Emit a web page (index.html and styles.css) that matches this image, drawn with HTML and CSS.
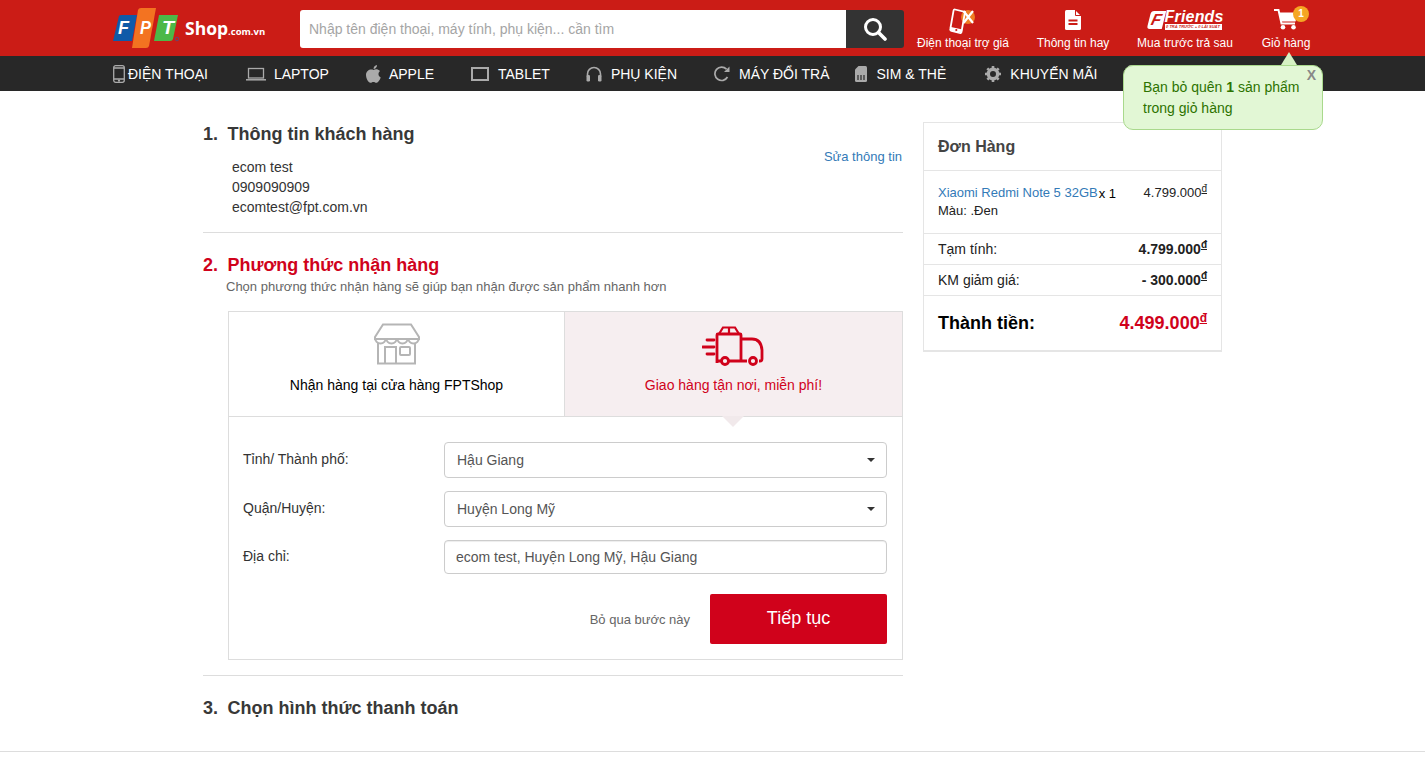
FILE: index.html
```html
<!DOCTYPE html>
<html lang="vi">
<head>
    <meta charset="UTF-8">
    <title>FPT Shop - Thanh toán</title>
    <link rel="stylesheet" href="styles.css">
</head>
<body>

<header class="topbar">
    <div class="topbar-in">
        <a class="logo">
            <svg class="logo-tiles" width="67" height="41" viewBox="0 0 67 41">
                <path d="M6 8 Q6.500 7 9 7 L24 7 L19 33 L0 33 Z" fill="#0f5aa8"/>
                <path d="M25 2 Q25.500 0 28 0 L43 0 L36 38 Q35.500 40 33 40 L19 40 Z" fill="#f37321"/>
                <path d="M46 7 L65 7 L60 31 Q59.500 33 57 33 L41 33 Z" fill="#4cb848"/>
                <text x="5" y="26" class="logo-letter" textLength="11" lengthAdjust="spacingAndGlyphs">F</text>
                <text x="27" y="26" class="logo-letter" textLength="11" lengthAdjust="spacingAndGlyphs">P</text>
                <text x="49" y="26" class="logo-letter" textLength="12" lengthAdjust="spacingAndGlyphs">T</text>
                <circle cx="64" cy="31" r="1.800" fill="none" stroke="#4a4f8c" stroke-width="0.800"/>
            </svg>
            <span class="logo-name">Shop<small>.com.vn</small></span>
        </a>
        <form class="search">
            <input class="search-input" type="text" placeholder="Nhập tên điện thoại, máy tính, phụ kiện... cần tìm">
            <button class="search-btn" type="button">
                <svg width="24" height="24" viewBox="0 0 24 24" fill="none" stroke="#fff">
                    <circle cx="10" cy="10" r="7.5" stroke-width="3"/>
                    <path d="M15.5 15.5 L22 22" stroke-width="3.6" stroke-linecap="round"/>
                </svg>
            </button>
        </form>
        <ul class="top-links">
            <li class="top-link link-phone">
                <svg width="28" height="27" viewBox="0 0 28 27">
                    <circle cx="19" cy="9" r="7" fill="#ef7d23"/>
                    <path d="M6 1.500 L16 4 L12.500 24 Q12.300 25.500 10.500 25 L2.500 23 Q1 22.500 1.300 21 L4.500 2.800 Q4.800 1.200 6 1.500 Z" fill="none" stroke="#fff" stroke-width="1.800"/>
                    <path d="M2 19 L13.500 21.500 L12.500 25 L1 22.500 Z" fill="#fff"/>
                    <circle cx="7.300" cy="22" r="1.100" fill="#cb1c16"/>
                    <path d="M14.500 3 L24 15 M24 3 L14.500 15" stroke="#fff" stroke-width="2.200"/>
                </svg>
                <span>Điện thoại trợ giá</span>
            </li>
            <li class="top-link link-news">
                <svg width="16" height="20" viewBox="0 0 16 20">
                    <path d="M1.500 0 H10 L16 6 V18.500 Q16 20 14.500 20 H1.500 Q0 20 0 18.500 V1.500 Q0 0 1.500 0 Z" fill="#fff"/>
                    <path d="M10.500 0 V5.500 H16" fill="none" stroke="#cb1c16" stroke-width="1"/>
                    <path d="M3.500 10.500 H12.500 M3.500 14 H12.500" stroke="#cb1c16" stroke-width="1.800"/>
                </svg>
                <span>Thông tin hay</span>
            </li>
            <li class="top-link link-friends">
                <div class="friends">
                    <span class="friends-f">F</span>
                    <div class="friends-text">
                        <b>Friends</b>
                        <i>0 TRẢ TRƯỚC + 0 LÃI SUẤT</i>
                    </div>
                </div>
                <span>Mua trước trả sau</span>
            </li>
            <li class="top-link link-cart">
                <svg width="24" height="21" viewBox="0 0 24 21">
                    <path d="M0 1 H4.500 L7.500 14.500 H21" fill="none" stroke="#fff" stroke-width="2"/>
                    <path d="M5 3.500 H24 L21.500 12.500 H7 Z" fill="#fff"/>
                    <circle cx="9" cy="18.300" r="2.300" fill="#fff"/>
                    <circle cx="19.500" cy="18.300" r="2.300" fill="#fff"/>
                </svg>
                <span class="cart-count">1</span>
                <span>Giỏ hàng</span>
            </li>
        </ul>
    </div>
</header>

<nav class="mainnav">
    <ul class="mainnav-in">
        <li class="nav-item item-phone">
            <svg width="12" height="18" viewBox="0 0 12 18" fill="none" stroke="#aaa" stroke-width="1.300"><rect x="0.700" y="0.700" width="10.600" height="16.600" rx="2"/><path d="M1 14 H11 M1 3 H11"/><circle cx="6" cy="15.700" r="0.500"/></svg>
            ĐIỆN THOẠI
        </li>
        <li class="nav-item item-tight item-laptop">
            <svg width="20" height="14" viewBox="0 0 20 14" fill="none" stroke="#aaa"><rect x="2.500" y="1.500" width="15" height="9.500" stroke-width="1.300"/><path d="M0 12.800 H20" stroke-width="1.500"/></svg>
            LAPTOP
        </li>
        <li class="nav-item item-tight">
            <svg width="15" height="18" viewBox="0 0 15 18" fill="#aaa"><path d="M7.500 5 C9 3.800 12 3.700 14 6 C12 7.500 11.800 11 14.700 12.500 C13.800 15 12 17.800 10.500 17.800 C9.200 17.800 8.800 17 7.500 17 C6 17 5.500 17.800 4.300 17.800 C2.500 17.800 0 13.500 0 10 C0 5.500 4.500 3.500 7.500 5 Z"/><path d="M7.500 4 C7.500 2 9 0.300 11 0 C11.200 2 9.500 4 7.500 4 Z"/></svg>
            APPLE
        </li>
        <li class="nav-item">
            <svg width="18" height="14" viewBox="0 0 18 14" fill="none" stroke="#aaa" stroke-width="2"><rect x="1" y="1" width="16" height="12"/></svg>
            TABLET
        </li>
        <li class="nav-item item-acc">
            <svg width="16" height="16" viewBox="0 0 16 16" fill="none" stroke="#aaa"><path d="M1.500 10 V8 A6.500 6.500 0 0 1 14.500 8 V10" stroke-width="1.600"/><rect x="0.500" y="9" width="3.500" height="6.500" rx="1.200" fill="#aaa" stroke="none"/><rect x="12" y="9" width="3.500" height="6.500" rx="1.200" fill="#aaa" stroke="none"/></svg>
            PHỤ KIỆN
        </li>
        <li class="nav-item">
            <svg width="16" height="16" viewBox="0 0 16 16" fill="none" stroke="#aaa"><path d="M13.500 11 A6.700 6.700 0 1 1 12.500 3.200" stroke-width="1.700"/><path d="M15.500 0.500 V6 H10 Z" fill="#aaa" stroke="none"/></svg>
            MÁY ĐỔI TRẢ
        </li>
        <li class="nav-item item-sim">
            <svg width="12" height="16" viewBox="0 0 12 16"><path d="M3.500 0 H10.500 Q12 0 12 1.500 V14.500 Q12 16 10.500 16 H1.500 Q0 16 0 14.500 V3.500 Z" fill="#aaa"/><path d="M3 9 V14 M6 9 V14 M9 9 V14" stroke="#282828" stroke-width="1.200"/></svg>
            SIM &amp; THẺ
        </li>
        <li class="nav-item item-promo">
            <svg width="16" height="16" viewBox="0 0 16 16"><circle cx="8" cy="8" r="4.700" fill="none" stroke="#aaa" stroke-width="3.400"/><path d="M8 0 V16 M0 8 H16 M2.300 2.300 L13.700 13.700 M13.700 2.300 L2.300 13.700" stroke="#aaa" stroke-width="2.600" stroke-dasharray="2.600 10.800 2.600"/></svg>
            KHUYẾN MÃI
        </li>
        <li class="nav-item item-hidden">
            <svg width="12" height="18" viewBox="0 0 12 18"><ellipse cx="6" cy="9" rx="6" ry="9" fill="#aaa"/></svg>
        </li>
    </ul>
</nav>

<div class="cart-tip">
    <span class="cart-tip-close">X</span>
    Bạn bỏ quên <b>1</b> sản phẩm<br>trong giỏ hàng
</div>

<main class="page">
    <div class="steps">
        <section class="step step-info">
            <h3 class="step-title"><span>1.</span>Thông tin khách hàng</h3>
            <div class="info-row">
                <div class="info">
                    ecom test<br>
                    0909090909<br>
                    ecomtest@fpt.com.vn
                </div>
                <a class="info-edit">Sửa thông tin</a>
            </div>
        </section>

        <section class="step step-ship">
            <h3 class="step-title active"><span>2.</span>Phương thức nhận hàng</h3>
            <p class="step-note">Chọn phương thức nhận hàng sẽ giúp bạn nhận được sản phẩm nhanh hơn</p>
            <div class="ship-box">
                <div class="ship-tabs">
                    <div class="ship-tab">
                        <svg width="46" height="42" viewBox="0 0 46 42" fill="none" stroke="#b5b5b5" stroke-width="2">
                            <path d="M9 1.500 H37 L45 14 V16 H1 V14 Z"/>
                            <path d="M1 15 A5.500 5.500 0 0 0 12 15 A5.500 5.500 0 0 0 23 15 A5.500 5.500 0 0 0 34 15 A5.500 5.500 0 0 0 45 15"/>
                            <path d="M4 20 V40.500 H41 V20"/>
                            <path d="M11 40.500 V24 H22 V40.500"/>
                            <rect x="26" y="24" width="10" height="8" rx="1"/>
                        </svg>
                        <span>Nhận hàng tại cửa hàng FPTShop</span>
                    </div>
                    <div class="ship-tab selected">
                        <svg width="62" height="40" viewBox="0 0 62 40" fill="none" stroke="#d0021b" stroke-width="2.800">
                            <path d="M15 37 V9 Q15 8 16 8 H38 Q39 8 39 9 V35"/>
                            <path d="M17 8 L21 1.500 H33 L37 8 M27 1.500 V8" stroke-width="2.200"/>
                            <path d="M39 13 H50 Q59 13 60 24 V33 Q60 35 58 35 H57"/>
                            <path d="M45 35 H27 M19 35 H15"/>
                            <circle cx="23" cy="35" r="3.500"/>
                            <circle cx="51" cy="35" r="3.500"/>
                            <path d="M5 14 H12 M0.500 21 H12 M5 28 H12" stroke-linecap="round"/>
                        </svg>
                        <span>Giao hàng tận nơi, miễn phí!</span>
                    </div>
                </div>
                <form class="ship-form">
                    <div class="form-row">
                        <label>Tỉnh/ Thành phố:</label>
                        <div class="select-wrap">
                            <select class="field"><option>Hậu Giang</option></select>
                        </div>
                    </div>
                    <div class="form-row">
                        <label>Quận/Huyện:</label>
                        <div class="select-wrap">
                            <select class="field"><option>Huyện Long Mỹ</option></select>
                        </div>
                    </div>
                    <div class="form-row">
                        <label>Địa chỉ:</label>
                        <input class="field field-text" type="text" value="ecom test, Huyện Long Mỹ, Hậu Giang">
                    </div>
                    <div class="form-actions">
                        <a class="skip">Bỏ qua bước này</a>
                        <button class="btn-next" type="button">Tiếp tục</button>
                    </div>
                </form>
            </div>
        </section>

        <section class="step step-pay">
            <h3 class="step-title"><span>3.</span>Chọn hình thức thanh toán</h3>
        </section>
    </div>

    <aside class="order">
        <h4 class="order-head">Đơn Hàng</h4>
        <div class="order-item">
            <div>
                <a class="order-name">Xiaomi Redmi Note 5 32GB</a><span class="order-qty">x 1</span><br>
                Màu: .Đen
            </div>
            <div class="price">4.799.000<sup>đ</sup></div>
        </div>
        <div class="order-row">
            <span>Tạm tính:</span>
            <b class="price">4.799.000<sup>đ</sup></b>
        </div>
        <div class="order-row">
            <span>KM giảm giá:</span>
            <b class="price">- 300.000<sup>đ</sup></b>
        </div>
        <div class="order-total">
            <b>Thành tiền:</b>
            <b class="price total-price">4.499.000<sup>đ</sup></b>
        </div>
    </aside>
</main>

<footer class="bottom-line"></footer>

</body>
</html>
```

FILE: styles.css
```css
* {
    box-sizing: border-box;
}

body {
    margin: 0;
    font-family: "Liberation Sans", Arial, sans-serif;
    font-size: 14px;
    color: #333;
    background-color: #fff;
    position: relative;
    height: 775px;
    overflow: hidden;
}

ul {
    list-style: none;
    margin: 0;
    padding: 0;
}

/* top red bar */
.topbar {
    height: 56px;
    background-color: #cb1c16;
}

.topbar-in {
    width: 1199px;
    height: 56px;
    margin: 0 auto;
    display: flex;
}

.logo {
    width: 187px;
    padding-top: 8px;
    display: flex;
    align-items: flex-start;
}

.logo-tiles {
    flex: none;
}

.logo-letter {
    font-family: "Liberation Sans", Arial, sans-serif;
    font-size: 18px;
    font-weight: bold;
    font-style: italic;
    fill: #fff;
}

.logo-name {
    margin: 8px 0 0 5px;
    font-family: "Open Sans", sans-serif;
    font-size: 17.500px;
    font-weight: bold;
    color: #fff;
    white-space: nowrap;
}

.logo-name small {
    font-size: 9.500px;
}

.search {
    width: 604px;
    height: 38px;
    margin-top: 10px;
    display: flex;
}

.search-input {
    flex: 1;
    border: 0;
    border-radius: 3px 0 0 3px;
    padding: 0 9px;
    font-family: inherit;
    font-size: 14px;
    outline: none;
}

.search-input::placeholder {
    color: #a5a5a5;
}

.search-btn {
    width: 58px;
    border: 0;
    padding: 3px 0 0;
    border-radius: 0 3px 3px 0;
    background-color: #333;
}

.top-links {
    display: flex;
    margin-left: 12px;
}

.top-link {
    position: relative;
    display: flex;
    flex-direction: column;
    align-items: center;
    justify-content: flex-end;
    height: 50px;
    font-size: 12px;
    color: #fff;
    white-space: nowrap;
}

.top-link span {
    line-height: 14px;
}

.top-link svg {
    display: block;
    margin-bottom: 6px;
}

.link-phone {
    width: 94px;
}

.link-phone svg {
    margin-bottom: 1px;
}

.link-news {
    width: 74px;
    margin-left: 26px;
}

.link-friends {
    width: 98px;
    margin-left: 26px;
}

.link-cart {
    width: 50px;
    margin-left: 27px;
}

.friends {
    display: flex;
    height: 19px;
    margin-bottom: 6px;
}

.friends-f {
    width: 15px;
    height: 18px;
    margin-right: 1px;
    background-color: #fff;
    color: #cb1c16;
    font-size: 16px;
    line-height: 18px !important;
    font-weight: bold;
    font-style: italic;
    text-align: center;
    transform: skewX(-14deg);
    border-radius: 3px 0 0 3px;
}

.friends-text {
    width: 57px;
}

.friends-text b {
    display: block;
    font-size: 16px;
    line-height: 12px;
    font-style: italic;
    letter-spacing: 0.2px;
}

.friends-text i {
    display: block;
    height: 6px;
    margin-top: 1px;
    background-color: #fff;
    color: #cb1c16;
    font-size: 4px;
    line-height: 6px;
    font-weight: bold;
    text-align: center;
    overflow: hidden;
}

.cart-count {
    position: absolute;
    top: 6px;
    right: 2px;
    width: 16px;
    height: 16px;
    border-radius: 50%;
    background-color: #f5a623;
    font-size: 10px;
    font-weight: bold;
    line-height: 16px !important;
    text-align: center;
}

/* dark nav */
.mainnav {
    height: 35px;
    background-color: #282828;
}

.mainnav-in {
    width: 1199px;
    height: 35px;
    margin: 0 auto;
    display: flex;
    gap: 37px;
}

.nav-item {
    display: flex;
    align-items: center;
    gap: 9px;
    color: #fff;
    font-size: 14px;
    white-space: nowrap;
}

.item-tight {
    gap: 8px;
}

.item-phone {
    gap: 3px;
}

.item-laptop {
    margin-left: 1px;
}

.item-acc {
    margin-left: -1px;
}

.item-sim {
    margin-left: -12px;
    gap: 10px;
}

.item-promo {
    margin-left: 2px;
}

.item-hidden {
    margin-left: -9px;
}

/* tooltip over the nav */
.cart-tip {
    position: absolute;
    left: 1123px;
    top: 65px;
    width: 200px;
    height: 65px;
    padding: 11px 19px;
    border: 1px solid #a9d98c;
    border-radius: 10px;
    background-color: #e2f7d5;
    color: #2d7300;
    font-size: 14px;
    line-height: 21px;
}

.cart-tip::before {
    content: "";
    position: absolute;
    top: -14px;
    left: 157px;
    border-left: 8px solid transparent;
    border-right: 8px solid transparent;
    border-bottom: 13px solid #d6f1c3;
}

.cart-tip-close {
    position: absolute;
    top: 2px;
    right: 6px;
    color: #888;
    font-size: 14px;
    line-height: 15px;
    font-weight: bold;
}

/* page */
.page {
    width: 1019px;
    margin: 0 auto;
    padding-top: 31px;
    display: flex;
    gap: 20px;
    align-items: flex-start;
}

.steps {
    width: 700px;
}

.step-title {
    margin: 0;
    font-size: 18px;
    line-height: 24px;
    font-weight: bold;
    color: #383838;
}

.step-title span {
    display: inline-block;
    width: 24.500px;
}

.step-title.active {
    color: #d0021b;
}

.step-info {
    padding-bottom: 15px;
    border-bottom: 1px solid #ddd;
}

.info-row {
    display: flex;
    justify-content: space-between;
    margin-top: 11px;
    padding-left: 29px;
}

.info {
    line-height: 20px;
}

.info-edit {
    margin: -8px 1px 0 0;
    font-size: 13px;
    line-height: 16px;
    color: #337ab7;
}

.step-ship {
    padding-top: 20px;
    padding-bottom: 15px;
    border-bottom: 1px solid #ddd;
}

.step-note {
    margin: 1px 0 15px 23px;
    font-size: 13px;
    line-height: 18px;
    color: #666;
}

.ship-box {
    margin-left: 25px;
    height: 349px;
    border: 1px solid #ddd;
}

.ship-tabs {
    display: flex;
    height: 105px;
    border-bottom: 1px solid #ddd;
}

.ship-tab {
    position: relative;
    width: 335px;
    display: flex;
    flex-direction: column;
    align-items: center;
    padding-top: 11px;
    font-size: 14px;
    color: #000;
}

.ship-tab svg {
    display: block;
    height: 42px;
}

.ship-tab span {
    margin-top: 10px;
    line-height: 20px;
}

.ship-tab.selected {
    width: 338px;
    border-left: 1px solid #ddd;
    background-color: #f6eef0;
    color: #d0021b;
}

.ship-tab.selected svg {
    margin: 2px 0 -2px -2px;
}

.ship-tab.selected::after {
    content: "";
    position: absolute;
    left: 157px;
    bottom: -11px;
    border-left: 11px solid transparent;
    border-right: 11px solid transparent;
    border-top: 11px solid #f1e9eb;
}

.ship-form {
    padding: 25px 15px 0 14px;
}

.form-row {
    display: flex;
    align-items: center;
    margin-bottom: 13px;
}

.form-row label {
    width: 201px;
    margin-top: -2px;
}

.select-wrap {
    position: relative;
    flex: 1;
}

.select-wrap::after {
    content: "";
    position: absolute;
    right: 12px;
    top: 16px;
    border-left: 4px solid transparent;
    border-right: 4px solid transparent;
    border-top: 4px solid #333;
}

.field {
    display: block;
    width: 100%;
    height: 36px;
    padding: 0 12px;
    border: 1px solid #ccc;
    border-radius: 4px;
    background-color: #fff;
    font-family: inherit;
    font-size: 14px;
    color: #555;
    appearance: none;
    outline: none;
}

.field-text {
    flex: 1;
    width: auto;
    height: 34px;
    padding-left: 11px;
    box-shadow: inset 0 1px 1px rgba(0, 0, 0, 0.075);
}

.form-actions {
    display: flex;
    justify-content: flex-end;
    align-items: center;
    gap: 20px;
    margin-top: 20px;
}

.skip {
    font-size: 13px;
    color: #666;
}

.btn-next {
    width: 177px;
    height: 50px;
    border: 0;
    padding: 0 0 2px;
    border-radius: 2px;
    background-color: #d0021b;
    color: #fff;
    font-family: inherit;
    font-size: 18px;
}

.step-pay {
    padding-top: 20px;
}

/* order summary */
.order {
    width: 299px;
    height: 230px;
    border: 1px solid #e5e5e5;
    border-bottom-width: 2px;
    margin-top: 0;
    color: #222;
    font-size: 13px;
}

.order-head {
    margin: 0;
    height: 48px;
    padding: 0 14px;
    border-bottom: 1px solid #e5e5e5;
    font-size: 16px;
    line-height: 47px;
    font-weight: bold;
    color: #444;
}

.order-item {
    height: 63px;
    padding: 13px 14px 0;
    display: flex;
    justify-content: space-between;
    border-bottom: 1px solid #e5e5e5;
    font-size: 13px;
    line-height: 18px;
}

.order-name {
    font-size: 13px;
    color: #337ab7;
}

.order-qty {
    display: inline-block;
    font-size: 13px;
    color: #000;
    margin-left: 1px;
    transform: translateY(1px);
}

.price sup {
    font-size: 10px;
    line-height: 0;
    text-decoration: underline;
}

.order-row {
    height: 31px;
    padding: 0 14px;
    display: flex;
    justify-content: space-between;
    align-items: center;
    border-bottom: 1px solid #e5e5e5;
    font-size: 14px;
}

.order-total {
    padding: 0 14px;
    height: 54px;
    display: flex;
    justify-content: space-between;
    align-items: center;
    font-size: 18px;
    color: #000;
}

.total-price {
    color: #d0021b;
}

.total-price sup {
    font-size: 12px;
}

.bottom-line {
    position: absolute;
    left: 0;
    right: 0;
    top: 751px;
    border-top: 1px solid #ddd;
}
```
